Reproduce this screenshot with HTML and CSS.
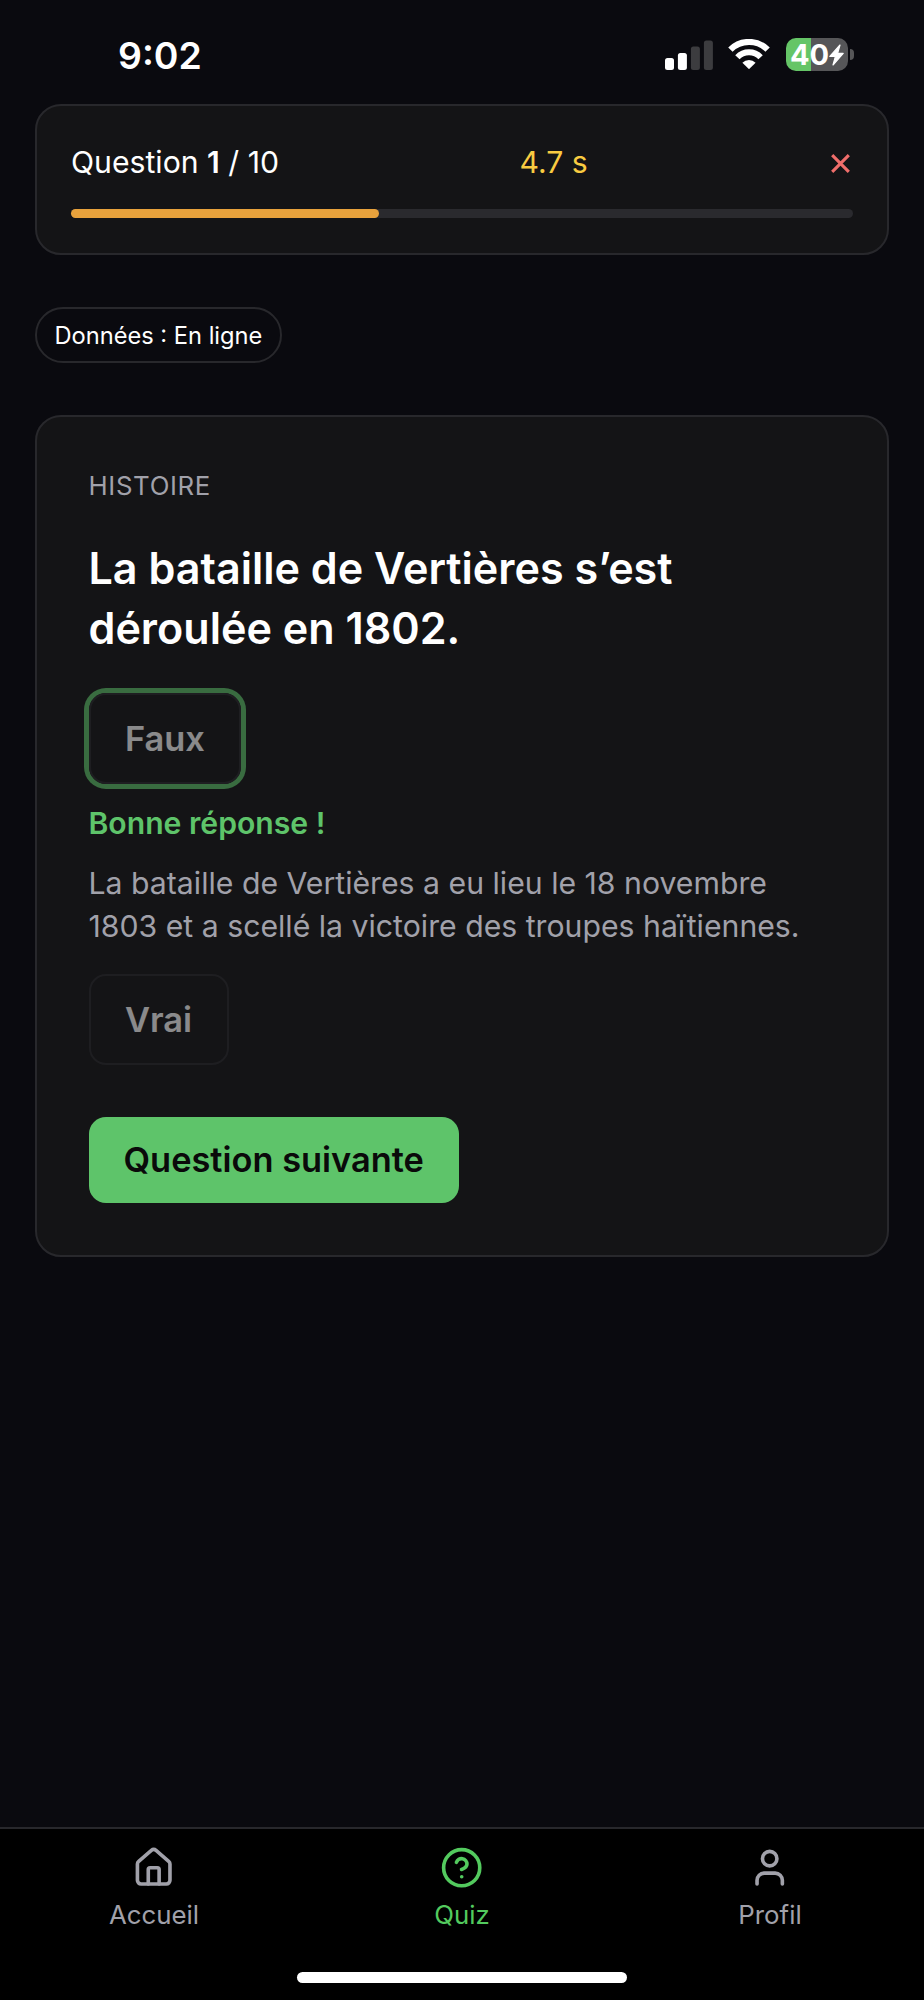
FILE: index.html
```html
<!DOCTYPE html>
<html lang="fr">
<head>
<meta charset="utf-8">
<title>Quiz</title>
<link rel="stylesheet" href="styles.css">
</head>
<body>
<div class="screen">
  <header class="status">
    <span class="clock">9:02</span>
    <div class="indicators">
      <svg class="signal" width="48" height="30" viewBox="0 0 48 30">
        <rect x="0" y="18" width="9" height="12" rx="2.5" fill="#fff"/>
        <rect x="12.9" y="13" width="9" height="17" rx="2.5" fill="#fff"/>
        <rect x="25.9" y="6.5" width="9" height="23.5" rx="2.5" fill="#3c3c3f"/>
        <rect x="38.9" y="0.5" width="9" height="29.5" rx="2.5" fill="#3c3c3f"/>
      </svg>
      <svg class="wifi" width="42" height="30" viewBox="0 0 42 30">
        <path d="M2.4 10.6A26.5 26.5 0 0 1 39.6 10.6" fill="none" stroke="#fff" stroke-width="6.2"/>
        <path d="M9.4 18.3A16 16 0 0 1 32.6 18.3" fill="none" stroke="#fff" stroke-width="6"/>
        <path d="M21 30.2L14.4 23.8A9.2 9.2 0 0 1 27.6 23.8Z" fill="#fff"/>
      </svg>
      <div class="battery">
        <div class="cell">
          <span class="level">40</span>
          <svg class="bolt" width="15" height="22" viewBox="0 0 15 22"><path d="M11 1L0.8 12.4H6.4L4 21L14.2 9.4H8.6Z" fill="#fff" stroke="#fff" stroke-width="1.2" stroke-linejoin="round"/></svg>
        </div>
        <span class="cap"></span>
      </div>
    </div>
  </header>

  <main class="content">
    <section class="card progress-card">
      <div class="progress-row">
        <span class="counter">Question <b>1</b> / 10</span>
        <span class="timer">4.7 s</span>
        <svg class="close" width="19" height="19" viewBox="0 0 19 19"><path d="M1.2 1.2L17.8 17.8M17.8 1.2L1.2 17.8" stroke="#f06e6b" stroke-width="3.1"/></svg>
      </div>
      <div class="track"><div class="fill"></div></div>
    </section>

    <span class="pill">Données : En ligne</span>

    <section class="card question-card">
      <p class="category">HISTOIRE</p>
      <h1 class="title">La bataille de Vertières s’est<br>déroulée en 1802.</h1>
      <button class="answer correct">Faux</button>
      <p class="verdict">Bonne réponse !</p>
      <p class="explanation">La bataille de Vertières a eu lieu le 18 novembre<br>1803 et a scellé la victoire des troupes haïtiennes.</p>
      <button class="answer">Vrai</button>
      <button class="next">Question suivante</button>
    </section>
  </main>

  <footer class="bottom">
    <nav class="tabs">
      <a class="tab">
        <svg class="icon" viewBox="0 0 24 24"><path d="M15 21v-8a1 1 0 0 0-1-1h-4a1 1 0 0 0-1 1v8"/><path d="M3 10a2 2 0 0 1 .709-1.528l7-5.999a2 2 0 0 1 2.582 0l7 5.999A2 2 0 0 1 21 10v9a2 2 0 0 1-2 2H5a2 2 0 0 1-2-2z"/></svg>
        <span>Accueil</span>
      </a>
      <a class="tab active">
        <svg class="icon" viewBox="0 0 24 24"><circle cx="12" cy="12" r="10"/><path d="M9.09 9a3 3 0 0 1 5.83 1c0 2-3 3-3 3"/><path d="M12 17h.01"/></svg>
        <span>Quiz</span>
      </a>
      <a class="tab">
        <svg class="icon" viewBox="0 0 24 24"><path d="M19 21v-2a4 4 0 0 0-4-4H9a4 4 0 0 0-4 4v2"/><circle cx="12" cy="7" r="4"/></svg>
        <span>Profil</span>
      </a>
    </nav>
    <div class="home-bar"></div>
  </footer>
</div>
</body>
</html>
```
FILE: styles.css
```css
* { box-sizing: border-box; }
body {
  margin: 0;
  background: #0a0a0f;
  color: #fff;
  font-family: Inter, "Liberation Sans", sans-serif;
}
p, h1 { margin: 0; font-weight: 400; }
button { font-family: inherit; display: block; margin: 0; }

.screen { width: 924px; height: 2000px; display: flex; flex-direction: column; }

.status {
  height: 104px;
  padding: 0 70px 0 118px;
  display: flex;
  justify-content: space-between;
  align-items: flex-start;
}
.clock { margin-top: 32px; font-size: 37.4px; line-height: 48px; font-weight: 600; }
.indicators { display: flex; align-items: flex-start; padding-top: 38px; }
.signal { margin-top: 1.5px; }
.wifi { margin: 1px 0 0 15px; }
.battery { display: flex; align-items: center; gap: 2px; margin-left: 16px; }
.cell {
  width: 62px;
  height: 33px;
  border-radius: 10px;
  background: linear-gradient(90deg, #65c567 25px, #565658 25px);
  display: flex;
  align-items: center;
  padding-left: 4px;
}
.level { font-size: 29px; line-height: 33px; font-weight: 700; width: 39px; }
.cap { width: 4px; height: 11px; border-radius: 0 5px 5px 0; background: #565658; }

.content { flex: 1; padding: 0 35px; display: flex; flex-direction: column; align-items: flex-start; }
.card { width: 854px; background: #141416; border: 2px solid #28282c; border-radius: 26px; }

.progress-card { height: 151px; padding: 35px 34px 34px; }
.progress-row { display: grid; grid-template-columns: 448.5px 1fr auto; align-items: center; height: 43px; font-size: 30.2px; line-height: 43px; padding-right: 3px; }
.counter b { font-weight: 600; }
.timer { color: #f9cb41; }
.close { margin-top: 2px; }
.track { margin-top: 25px; height: 9px; border-radius: 5px; background: #2a2a2e; }
.fill { width: 308px; height: 9px; border-radius: 5px; background: #e8a23c; }

.pill {
  height: 56px;
  margin: 52px 0;
  padding: 0 17.5px;
  border: 2px solid #28282c;
  border-radius: 28px;
  font-size: 23.65px;
  line-height: 53px;
}

.question-card { height: 842px; padding: 52px 51.5px 0; }
.category { font-size: 25.8px; line-height: 34px; letter-spacing: 0.65px; color: #a1a1aa; }
.title { margin-top: 35px; font-size: 43.1px; line-height: 60px; font-weight: 600; }
.answer {
  height: 91px;
  padding: 0 34.5px;
  background: transparent;
  border: 2px solid #28282c;
  border-radius: 17px;
  color: #fff;
  font-size: 34.4px;
  font-weight: 600;
  opacity: 0.5;
}
.correct { margin-top: 35px; box-shadow: 0 0 0 5px #5ec46a; }
.verdict { margin-top: 18px; font-size: 30.15px; line-height: 43px; font-weight: 600; color: #5ec46a; }
.explanation { margin-top: 17px; font-size: 30.22px; line-height: 43px; color: #a1a1aa; }
.question-card .explanation + .answer { margin-top: 26px; }
.next {
  height: 86px;
  margin-top: 51.5px;
  padding: 0 35px;
  border: 0;
  border-radius: 17px;
  background: #5ec46a;
  color: #0a0a0a;
  font-size: 34.4px;
  font-weight: 600;
}

.bottom { height: 173px; background: #000; border-top: 2px solid #28282c; display: flex; flex-direction: column; align-items: center; }
.tabs { width: 924px; height: 143px; display: grid; grid-template-columns: repeat(3, 1fr); }
.tab { display: flex; flex-direction: column; align-items: center; padding-top: 17px; font-size: 25.8px; line-height: 34px; color: #a1a1aa; }
.icon { width: 43.4px; height: 43.4px; margin: 0 0.6px 8.6px 0; fill: none; stroke: currentColor; stroke-width: 2; stroke-linecap: round; stroke-linejoin: round; }
.active { color: #53ca5e; }
.home-bar { width: 330px; height: 11px; border-radius: 6px; background: #fff; }
```
